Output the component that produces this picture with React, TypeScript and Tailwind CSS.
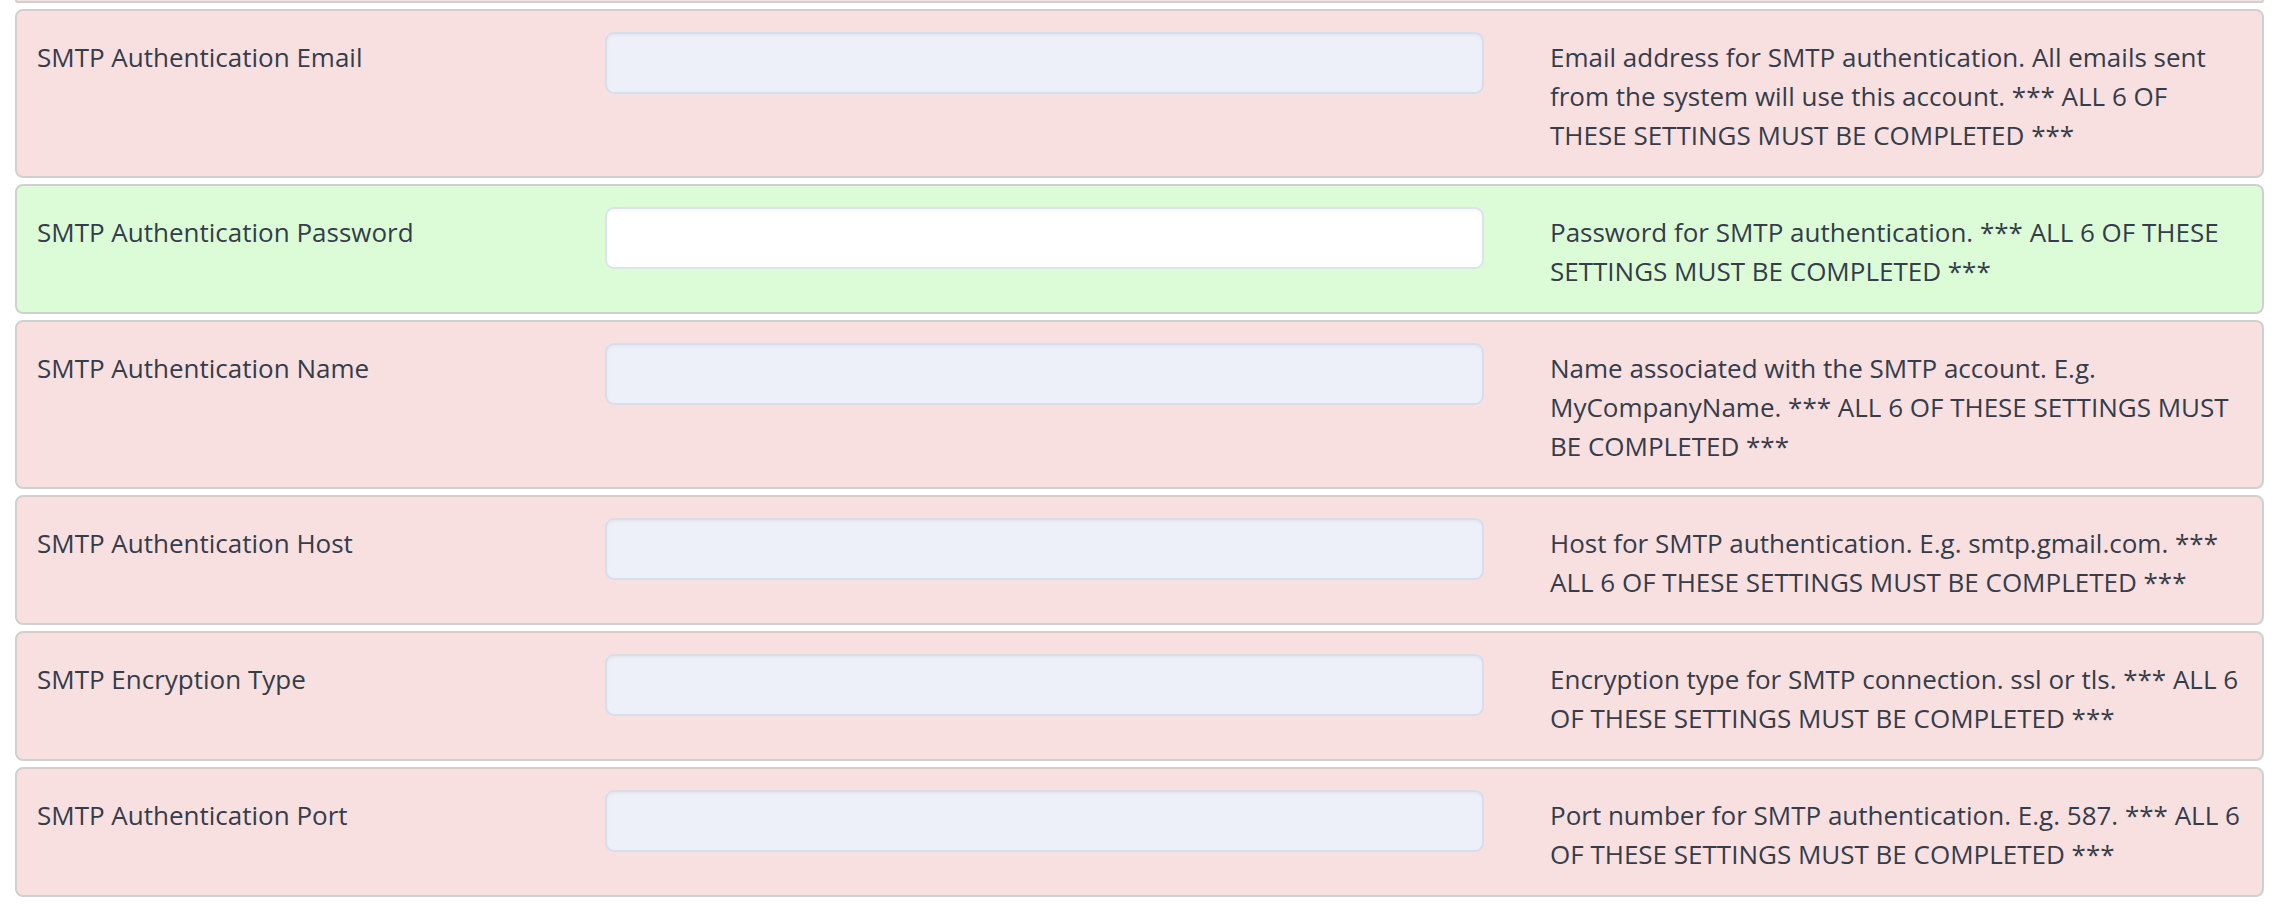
import React from "react";

type Row = { label: string; desc: string; ok?: boolean; type?: string };

const rows: Row[] = [
  {
    label: "SMTP Authentication Email",
    desc: "Email address for SMTP authentication. All emails sent from the system will use this account. *** ALL 6 OF THESE SETTINGS MUST BE COMPLETED ***",
  },
  {
    label: "SMTP Authentication Password",
    desc: "Password for SMTP authentication. *** ALL 6 OF THESE SETTINGS MUST BE COMPLETED ***",
    ok: true,
    type: "password",
  },
  {
    label: "SMTP Authentication Name",
    desc: "Name associated with the SMTP account. E.g. MyCompanyName. *** ALL 6 OF THESE SETTINGS MUST BE COMPLETED ***",
  },
  {
    label: "SMTP Authentication Host",
    desc: "Host for SMTP authentication. E.g. smtp.gmail.com. *** ALL 6 OF THESE SETTINGS MUST BE COMPLETED ***",
  },
  {
    label: "SMTP Encryption Type",
    desc: "Encryption type for SMTP connection. ssl or tls. *** ALL 6 OF THESE SETTINGS MUST BE COMPLETED ***",
  },
  {
    label: "SMTP Authentication Port",
    desc: "Port number for SMTP authentication. E.g. 587. *** ALL 6 OF THESE SETTINGS MUST BE COMPLETED ***",
  },
];

function SettingRow({ row }: { row: Row }) {
  return (
    <div
      className={
        "flex items-start rounded-[8px] border-2 border-[#d0d0d0] pl-[20px] pr-[20px] pt-[21px] pb-[21px] " +
        (row.ok ? "bg-[#dcfcd8]" : "bg-[#f8e0e0]")
      }
    >
      <div className="w-[568px] shrink-0 pt-[6px]">{row.label}</div>
      <div className="w-[879px] shrink-0">
        <input
          type={row.type ?? "text"}
          className={
            "block h-[62px] w-full rounded-[9px] border-2 px-3 shadow-[inset_0_2px_3px_rgba(0,0,0,0.04)] outline-none " +
            (row.ok ? "border-[#dde3ee] bg-white" : "border-[#d7deeb] bg-[#edf0f8]")
          }
        />
      </div>
      <div className="ml-[66px] flex-1 pt-[6px]">{row.desc}</div>
    </div>
  );
}

export default function App() {
  return (
    <div
      className="min-h-[912px] bg-white pl-[15px] pr-[24px] text-[26px] leading-[39px] text-[#353c4a]"
      style={{ fontFamily: '"Open Sans", "Noto Sans", sans-serif' }}
    >
      <div className="flex flex-col gap-[6px]">
        <div className="h-[3px] rounded-b-[8px] border-x-2 border-b-2 border-[#d0d0d0] bg-[#f8e0e0]" />
        {rows.map((r) => (
          <SettingRow key={r.label} row={r} />
        ))}
      </div>
    </div>
  );
}
